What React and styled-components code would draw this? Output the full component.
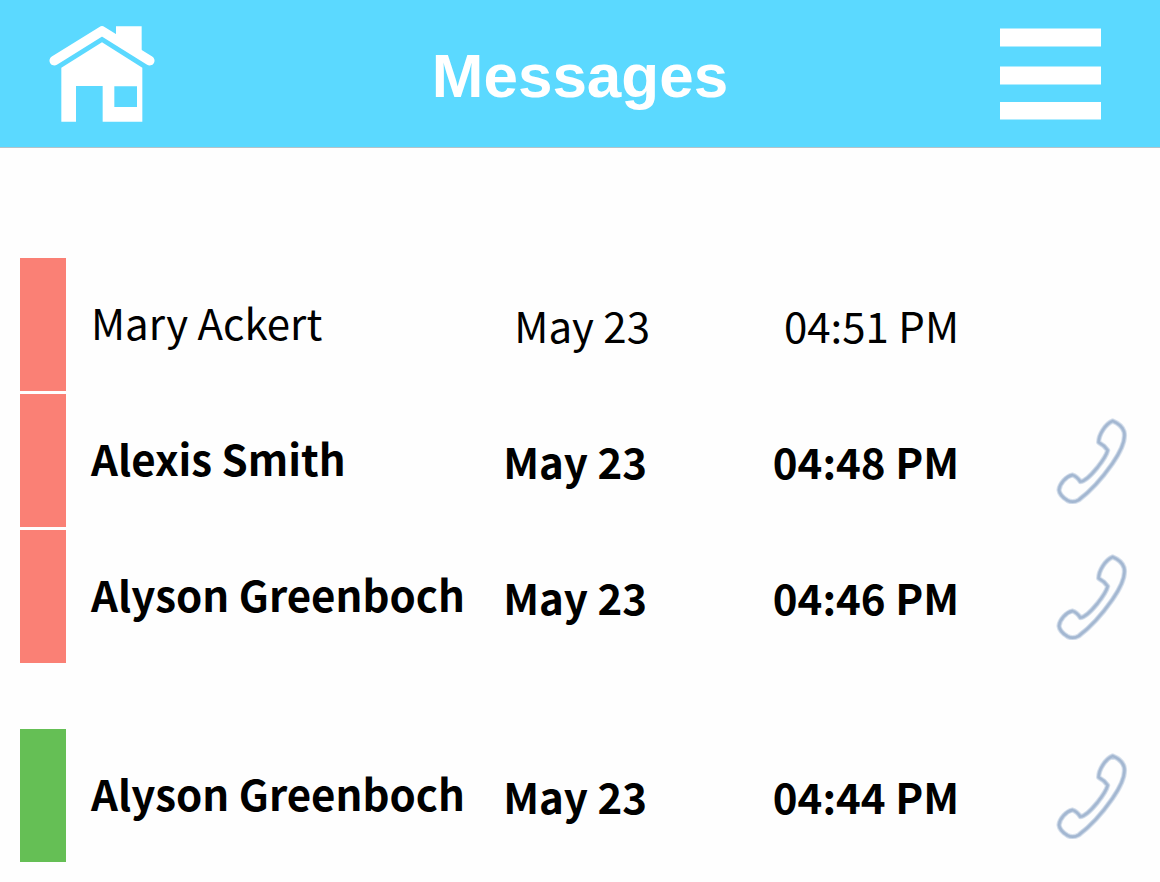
import React from "react";
import styled, { createGlobalStyle } from "styled-components";

const GlobalStyle = createGlobalStyle`
  * { box-sizing: border-box; }
  body {
    margin: 0;
    background: #fefefe;
    color: #000;
    font-family: "Noto Sans CJK SC", "Noto Sans", sans-serif;
  }
`;

const Header = styled.header`
  display: grid;
  grid-template-columns: 1fr auto 1fr;
  align-items: center;
  height: 148px;
  padding: 0 48px;
  background: #5bd9ff;
  border-bottom: 1px solid #b4c3ca;
`;

const Title = styled.h1`
  margin: 0;
  padding-top: 4px;
  color: #fff;
  font-family: "Liberation Sans", Arial, sans-serif;
  font-size: 62px;
  line-height: 62px;
  font-weight: 700;
`;

const HomeLink = styled.a`
  justify-self: start;
  display: flex;
`;

const IconButton = styled.button`
  justify-self: end;
  display: flex;
  margin: 0;
  padding: 0;
  border: 0;
  background: none;
  cursor: pointer;
`;

const MenuButton = styled(IconButton)`
  margin-right: 10px;
`;

const Main = styled.main`
  display: flex;
  flex-direction: column;
  gap: 66px;
  padding: 110px 30px 20px 20px;
`;

const Group = styled.ul`
  display: flex;
  flex-direction: column;
  gap: 3px;
  margin: 0;
  padding: 0;
  list-style: none;
`;

const Row = styled.li`
  display: grid;
  grid-template-columns: 71px 409fr 150fr 309fr 171fr;
  align-items: center;
  height: 133px;
  font-size: 42px;
  line-height: 60px;
  font-weight: ${(p) => (p.$unread ? 700 : 400)};
  white-space: nowrap;
`;

const Status = styled.span`
  align-self: stretch;
  width: 46px;
  background: ${(p) => p.$color};
`;

const Name = styled.span`
  padding-bottom: 6px;
`;

const DateText = styled.time`
  text-align: right;
  padding-right: ${(p) => (p.$unread ? 3 : 0)}px;
`;

const TimeText = styled.time`
  text-align: right;
`;

const HomeIcon = () => (
  <svg width="108" height="100" viewBox="54 42 324 300" fill="#fff" aria-hidden="true">
    <path d="M73 152 L216 63 L359 152" fill="none" stroke="#fff" strokeWidth="29" strokeLinecap="round" strokeLinejoin="round" />
    <path d="M258 49 H335 V140 L258 92 Z" />
    <path fillRule="evenodd" d="M94 173 L216 97 L337 173 V335 H218 V228 H138 V335 H94 Z M253 229 V291 H321 V229 Z" />
  </svg>
);

const MenuIcon = () => (
  <svg width="102" height="92" viewBox="0 0 102 92" fill="#fff" aria-hidden="true">
    <rect x="0" y="0.5" width="101" height="18" />
    <rect x="0" y="38.5" width="101" height="18" />
    <rect x="0" y="74" width="101" height="17.5" />
  </svg>
);

const handset =
  "M248 60 C263 66 277 76 282 92 C288 116 270 155 247 188 C217 231 181 271 146 297 Q128 307 112 298 Q89 284 87 267 C89 247 109 226 127 222 Q141 226 151 242 C166 241 183 223 201 201 C216 182 229 166 233 148 Q223 133 206 124 C206 101 226 69 248 60 Z";

const PhoneIcon = () => (
  <svg width="75" height="87" viewBox="75 48 225 261" fill="none" strokeLinejoin="round" aria-hidden="true">
    <path d={handset} stroke="#dae3ee" strokeWidth="16" />
    <path d={handset} stroke="#bccbdf" strokeWidth="11" />
    <path d={handset} stroke="#a3b7d1" strokeWidth="7" />
  </svg>
);

const groups = [
  {
    color: "#fa8075",
    messages: [
      { name: "Mary Ackert", date: "May 23", time: "04:51 PM", unread: false },
      { name: "Alexis Smith", date: "May 23", time: "04:48 PM", unread: true },
      { name: "Alyson Greenboch", date: "May 23", time: "04:46 PM", unread: true },
    ],
  },
  {
    color: "#65bf55",
    messages: [{ name: "Alyson Greenboch", date: "May 23", time: "04:44 PM", unread: true }],
  },
];

export default function App() {
  return (
    <>
      <GlobalStyle />
      <Header>
        <HomeLink href="#home" aria-label="Home">
          <HomeIcon />
        </HomeLink>
        <Title>Messages</Title>
        <MenuButton type="button" aria-label="Menu">
          <MenuIcon />
        </MenuButton>
      </Header>
      <Main>
        {groups.map((group) => (
          <Group key={group.color}>
            {group.messages.map((m) => (
              <Row key={m.time} $unread={m.unread}>
                <Status $color={group.color} />
                <Name>{m.name}</Name>
                <DateText $unread={m.unread}>{m.date}</DateText>
                <TimeText>{m.time}</TimeText>
                {m.unread && (
                  <IconButton type="button" aria-label={`Call ${m.name}`}>
                    <PhoneIcon />
                  </IconButton>
                )}
              </Row>
            ))}
          </Group>
        ))}
      </Main>
    </>
  );
}
